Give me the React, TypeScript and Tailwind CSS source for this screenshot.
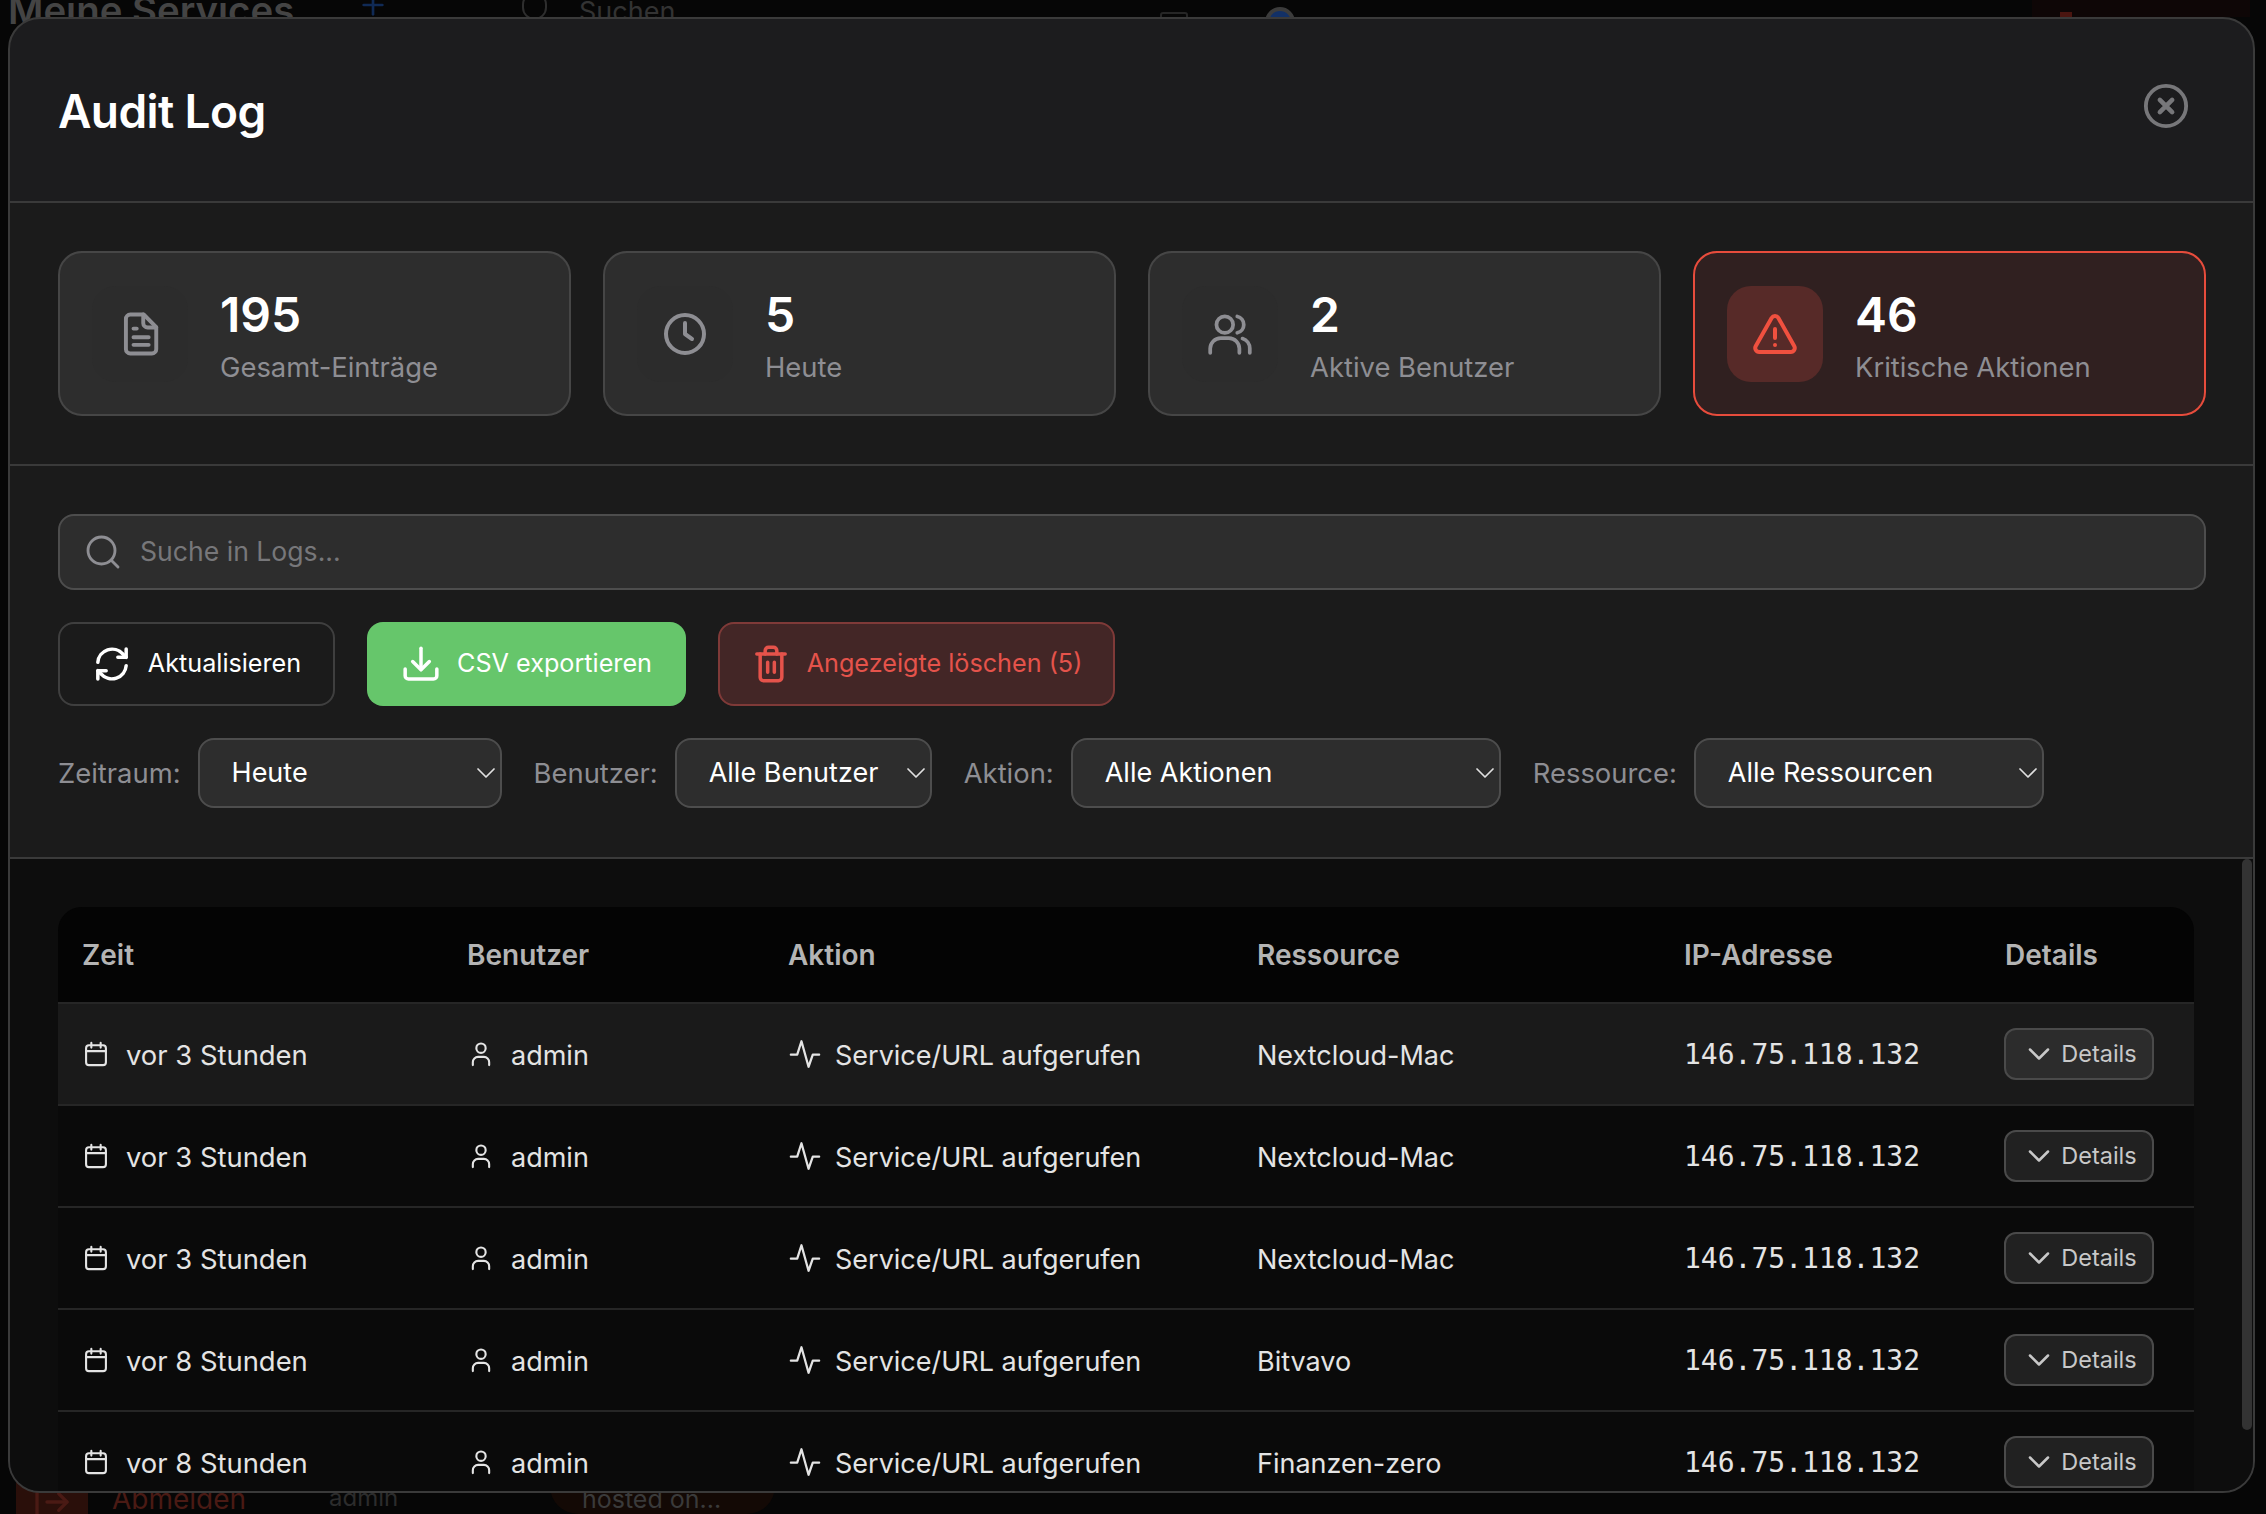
import React from 'react';
import { ChevronDown, LogOut, Plus } from 'lucide-react';

type IconProps = { className?: string };

const Svg: React.FC<IconProps & { children: React.ReactNode; sw?: number }> = ({ className, children, sw = 2 }) => (
    <svg viewBox="0 0 24 24" fill="none" stroke="currentColor" strokeWidth={sw} strokeLinecap="round" strokeLinejoin="round" className={className}>
        {children}
    </svg>
);

const DocIcon = ({ className }: IconProps) => (
    <Svg className={className} sw={1.8}>
        <path d="M7.5 3h6.2L19.5 8.8V19a2 2 0 0 1-2 2h-10a2 2 0 0 1-2-2V5a2 2 0 0 1 2-2z" />
        <path d="M13.5 3v4a2 2 0 0 0 2 2h4" />
        <path d="M9 9.5h1.5M9 13.5h7M9 17h7" />
    </Svg>
);

const ClockIcon = ({ className }: IconProps) => (
    <Svg className={className}>
        <circle cx="12" cy="12" r="9.5" />
        <path d="M12 6.5V12l3.5 2.5" />
    </Svg>
);

const UsersIcon = ({ className }: IconProps) => (
    <Svg className={className} sw={1.8}>
        <circle cx="9.5" cy="7.5" r="4" />
        <path d="M2.5 21v-2a5 5 0 0 1 5-5h4a5 5 0 0 1 5 5v2" />
        <path d="M15.5 3.6a4 4 0 0 1 0 7.8" />
        <path d="M21.5 21v-2a5 5 0 0 0-3.5-4.8" />
    </Svg>
);

const AlertIcon = ({ className }: IconProps) => (
    <Svg className={className}>
        <path d="M10.3 4 2.4 18a2 2 0 0 0 1.7 3h15.8a2 2 0 0 0 1.7-3L13.7 4a2 2 0 0 0-3.4 0z" />
        <path d="M12 9.5v4.5M12 17.5h.01" />
    </Svg>
);

const CloseIcon = ({ className }: IconProps) => (
    <Svg className={className}>
        <circle cx="12" cy="12" r="10.5" />
        <path d="m8.8 8.8 6.4 6.4M15.2 8.8l-6.4 6.4" strokeWidth={2.4} />
    </Svg>
);

const SearchIcon = ({ className }: IconProps) => (
    <Svg className={className} sw={1.9}>
        <circle cx="11" cy="11" r="9" />
        <path d="m18 18 4 4" />
    </Svg>
);

const RefreshIcon = ({ className }: IconProps) => (
    <Svg className={className} sw={2.1}>
        <path d="M3.5 11a8.6 8.6 0 0 1 15-5l2 2" />
        <path d="M20.5 3v5h-5" />
        <path d="M20.5 13a8.6 8.6 0 0 1-15 5l-2-2" />
        <path d="M8.5 16h-5v5" />
    </Svg>
);

const DownloadIcon = ({ className }: IconProps) => (
    <Svg className={className} sw={2.1}>
        <path d="M12 2.5V15" />
        <path d="m7 10.5 5 5 5-5" />
        <path d="M2.5 15v4a2 2 0 0 0 2 2h15a2 2 0 0 0 2-2v-4" />
    </Svg>
);

const TrashIcon = ({ className }: IconProps) => (
    <Svg className={className} sw={2.1}>
        <path d="M3.5 6h17" />
        <path d="M5.5 6v14a2 2 0 0 0 2 2h9a2 2 0 0 0 2-2V6" />
        <path d="M8.5 6V4a2 2 0 0 1 2-2h3a2 2 0 0 1 2 2v2" />
        <path d="M10 11v6M14 11v6" />
    </Svg>
);

const CalendarIcon = ({ className }: IconProps) => (
    <Svg className={className} sw={1.8}>
        <rect x="3.5" y="4.5" width="17" height="17" rx="2.5" />
        <path d="M3.5 9.5h17M8 2.5v4M16 2.5v4" />
    </Svg>
);

const UserIcon = ({ className }: IconProps) => (
    <Svg className={className} sw={1.8}>
        <circle cx="12" cy="7" r="4" />
        <path d="M5 21.5V19a4.5 4.5 0 0 1 4.5-4.5h5A4.5 4.5 0 0 1 19 19v2.5" />
    </Svg>
);

const ActivityIcon = ({ className }: IconProps) => (
    <Svg className={className} sw={1.6}>
        <path d="M2 12.5h4.5L9.5 3l5 18 3-8.5H22" />
    </Svg>
);

const stats = [
    { value: '195', label: 'Gesamt-Einträge', Icon: DocIcon, iconSize: 'w-[52px] h-[52px]' },
    { value: '5', label: 'Heute', Icon: ClockIcon, iconSize: 'w-[48px] h-[48px]' },
    { value: '2', label: 'Aktive Benutzer', Icon: UsersIcon, iconSize: 'w-[50px] h-[50px]' },
];

const filters = [
    { label: 'Zeitraum:', value: 'Heute', width: 'w-[304px]' },
    { label: 'Benutzer:', value: 'Alle Benutzer', width: 'w-[257px]' },
    { label: 'Aktion:', value: 'Alle Aktionen', width: 'w-[430px]' },
    { label: 'Ressource:', value: 'Alle Ressourcen', width: 'w-[350px]' },
];

const rows = [
    { time: 'vor 3 Stunden', resource: 'Nextcloud-Mac' },
    { time: 'vor 3 Stunden', resource: 'Nextcloud-Mac' },
    { time: 'vor 3 Stunden', resource: 'Nextcloud-Mac' },
    { time: 'vor 8 Stunden', resource: 'Bitvavo' },
    { time: 'vor 8 Stunden', resource: 'Finanzen-zero' },
];

const App: React.FC = () => {
    return (
        <div className="relative h-screen w-full overflow-hidden bg-[#060606] font-['Inter',sans-serif]">
            {/* page behind the dialog, dimmed */}
            <div className="absolute left-[8px] top-[-13px] text-[38.4px] leading-[46px] font-semibold text-[#444444] whitespace-nowrap">Meine Services</div>
            <Plus className="absolute left-[357px] top-[-11px] w-[32px] h-[32px] text-[#102a55]" />
            <div className="absolute left-[522px] top-[-8px] w-[25px] h-[28px] rounded-full border-2 border-[#2e2e2e]" />
            <div className="absolute left-[579px] top-[-8px] text-[27px] text-[#333333]">Suchen</div>
            <div className="absolute left-[1160px] top-[12px] w-[28px] h-[10px] rounded-[3px] border-2 border-[#262626]" />
            <div className="absolute left-[1265px] top-[7px] w-[30px] h-[30px] rounded-full bg-[#123066] border-4 border-[#3c3c3c]" />
            <div className="absolute left-[2032px] top-0 w-[218px] h-[17px] bg-[#0e0606]" />
            <div className="absolute left-[2060px] top-[12px] w-[12px] h-[6px] bg-[#4a1510]" />
            <div className="absolute left-[16px] top-[1480px] w-[72px] h-[40px] bg-[#2a0f0a]" />
            <LogOut className="absolute left-[32px] top-[1482px] w-[40px] h-[40px] text-[#4a1a14]" />
            <div className="absolute left-[112px] top-[1482px] text-[28px] leading-[34px] text-[#4a1a14]">Abmelden</div>
            <div className="absolute left-[329px] top-[1483px] text-[24px] leading-[30px] text-[#2c2c2c]">admin</div>
            <div className="absolute left-[550px] top-[1470px] w-[225px] h-[44px] rounded-b-[28px] bg-[#130905] pr-[22px] text-center text-[25px] leading-[58px] text-[#3a3a3a]">hosted on...</div>

            {/* dialog */}
            <div className="absolute left-[8px] top-[17px] w-[2247px] h-[1476px] flex flex-col rounded-[32px] border-2 border-[#3a3a3a] bg-[#1c1c1e] overflow-hidden">
                <div className="h-[182px] shrink-0 flex items-center justify-between pl-[48px] pr-[64px]">
                    <h1 className="text-[46px] font-semibold text-white tracking-[-0.6px] pt-[2px]">Audit Log</h1>
                    <button className="text-[#77777a] -mt-[8px]">
                        <CloseIcon className="w-[46px] h-[46px]" />
                    </button>
                </div>

                <div className="shrink-0 border-t-2 border-[#3a3a3a] bg-[#1b1b1b] pl-[48px] pr-[47px] py-[48px] grid grid-cols-4 gap-[32px]">
                    {stats.map(({ value, label, Icon, iconSize }) => (
                        <div key={label} className="h-[165px] flex items-center gap-[32px] px-[32px] rounded-[24px] border-2 border-[#464646] bg-[#2d2d2d]">
                            <div className="w-[96px] h-[96px] rounded-[24px] bg-[#2c2c2c] flex items-center justify-center text-[#8e8e93]">
                                <Icon className={iconSize} />
                            </div>
                            <div className="mt-[6px]">
                                <div className="text-[48px] leading-[56px] font-semibold text-white">{value}</div>
                                <div className="text-[27.4px] leading-[40px] mt-[4px] text-[#8e8e93]">{label}</div>
                            </div>
                        </div>
                    ))}
                    <div className="h-[165px] flex items-center gap-[32px] px-[32px] rounded-[24px] border-2 border-[#e74c3c] bg-[#302020]">
                        <div className="w-[96px] h-[96px] rounded-[24px] bg-[#572a28] flex items-center justify-center text-[#f0503f]">
                            <AlertIcon className="w-[48px] h-[48px]" />
                        </div>
                        <div className="mt-[6px]">
                            <div className="text-[48px] leading-[56px] font-semibold text-white">46</div>
                            <div className="text-[27.4px] leading-[40px] mt-[4px] text-[#8e8e93]">Kritische Aktionen</div>
                        </div>
                    </div>
                </div>

                <div className="shrink-0 h-[395px] border-y-2 border-[#3a3a3a] bg-[#1b1b1b] pl-[48px] pr-[47px] pt-[48px] flex flex-col">
                    <div className="relative h-[76px] rounded-[16px] border-2 border-[#4d4d4d] bg-[#2d2d2d] flex items-center pl-[25px] gap-[19px]">
                        <SearchIcon className="w-[36px] h-[36px] text-[#8e8e93]" />
                        <input placeholder="Suche in Logs..." className="flex-1 bg-transparent text-[26.6px] text-white placeholder:text-[#77777a] outline-none" />
                    </div>

                    <div className="flex gap-[32px] mt-[32px]">
                        <button className="h-[84px] w-[277px] rounded-[16px] border-2 border-[#3f3f3f] flex items-center justify-center gap-[16px] text-[25.2px] text-white">
                            <RefreshIcon className="w-[40px] h-[40px]" />
                            Aktualisieren
                        </button>
                        <button className="h-[84px] w-[319px] rounded-[16px] bg-[#66c66b] flex items-center justify-center gap-[16px] text-[25.2px] text-white">
                            <DownloadIcon className="w-[40px] h-[40px]" />
                            CSV exportieren
                        </button>
                        <button className="h-[84px] w-[397px] rounded-[16px] border-2 border-[#7f3a38] bg-[#432626] flex items-center justify-center gap-[16px] text-[25.2px] text-[#e5534b]">
                            <TrashIcon className="w-[40px] h-[40px]" />
                            Angezeigte löschen (5)
                        </button>
                    </div>

                    <div className="flex items-center mt-[32px] gap-[32px]">
                        {filters.map((f) => (
                            <div key={f.label} className="flex items-center gap-[17px]">
                                <span className="text-[27.4px] text-[#8e8e93] pt-[2px]">{f.label}</span>
                                <div className={`relative ${f.width}`}>
                                    <select defaultValue={f.value} className="appearance-none w-full h-[70px] rounded-[16px] border-2 border-[#4d4d4d] bg-[#2d2d2d] pl-[32px] text-[27px] text-white outline-none">
                                        <option>{f.value}</option>
                                    </select>
                                    <ChevronDown className="absolute right-0 top-[19px] w-[32px] h-[32px] text-[#e0e0e0]" strokeWidth={1.3} />
                                </div>
                            </div>
                        ))}
                    </div>
                </div>

                <div className="relative flex-1 min-h-0 overflow-hidden bg-[#0d0d0d] pl-[48px] pt-[48px]">
                    <div className="absolute right-[1px] top-0 w-[10px] h-[571px] rounded-full bg-[#333333]" />
                    <table className="w-[2136px] table-fixed border-separate border-spacing-0 rounded-t-[24px] overflow-hidden bg-[#0a0a0a]">
                        <thead>
                            <tr className="bg-[#040404] text-left text-[28px] font-semibold text-[#b4b4b4]">
                                <th className="w-[385px] h-[95px] pl-[24px] pt-[1px] font-semibold">Zeit</th>
                                <th className="w-[321px] pl-[24px] pt-[1px] font-semibold">Benutzer</th>
                                <th className="w-[469px] pl-[24px] pt-[1px] font-semibold">Aktion</th>
                                <th className="w-[427px] pl-[24px] pt-[1px] font-semibold">Ressource</th>
                                <th className="w-[321px] pl-[24px] pt-[1px] font-semibold">IP-Adresse</th>
                                <th className="w-[213px] pl-[24px] pt-[1px] font-semibold">Details</th>
                            </tr>
                        </thead>
                        <tbody className="text-[27px] text-[#e4e4e4]">
                            {rows.map((row, i) => (
                                <tr key={i} className={i === 0 ? 'bg-[#1a1a1a]' : ''}>
                                    <td className="h-[102px] pl-[24px] pt-[4px] border-t-2 border-[#262626]">
                                        <div className="flex items-center gap-[16px] text-[27.4px]">
                                            <CalendarIcon className="w-[28px] h-[28px] shrink-0 -mt-[4px]" />
                                            {row.time}
                                        </div>
                                    </td>
                                    <td className="pl-[24px] pt-[4px] border-t-2 border-[#262626]">
                                        <div className="flex items-center gap-[16px]">
                                            <UserIcon className="w-[28px] h-[28px] shrink-0 -mt-[4px]" />
                                            admin
                                        </div>
                                    </td>
                                    <td className="pl-[24px] pt-[4px] border-t-2 border-[#262626]">
                                        <div className="flex items-center gap-[13px]">
                                            <ActivityIcon className="w-[34px] h-[34px] shrink-0 -mt-[4px]" />
                                            Service/URL aufgerufen
                                        </div>
                                    </td>
                                    <td className="pl-[24px] pt-[4px] border-t-2 border-[#262626]">{row.resource}</td>
                                    <td className="pl-[24px] pt-[2px] border-t-2 border-[#262626] font-['DejaVu_Sans_Mono',monospace] text-[28px]">146.75.118.132</td>
                                    <td className="pl-[23px] border-t-2 border-[#262626]">
                                        <button className={`h-[52px] w-[150px] rounded-[12px] border-2 border-[#4a4a4a] flex items-center justify-center gap-[4px] text-[23.5px] text-[#c8c8c8] ${i === 0 ? 'bg-[#2c2c2c]' : 'bg-[#212121]'}`}>
                                            <ChevronDown className="w-[36px] h-[36px]" strokeWidth={1.7} />
                                            Details
                                        </button>
                                    </td>
                                </tr>
                            ))}
                        </tbody>
                    </table>
                </div>
            </div>
        </div>
    );
};

export default App;
